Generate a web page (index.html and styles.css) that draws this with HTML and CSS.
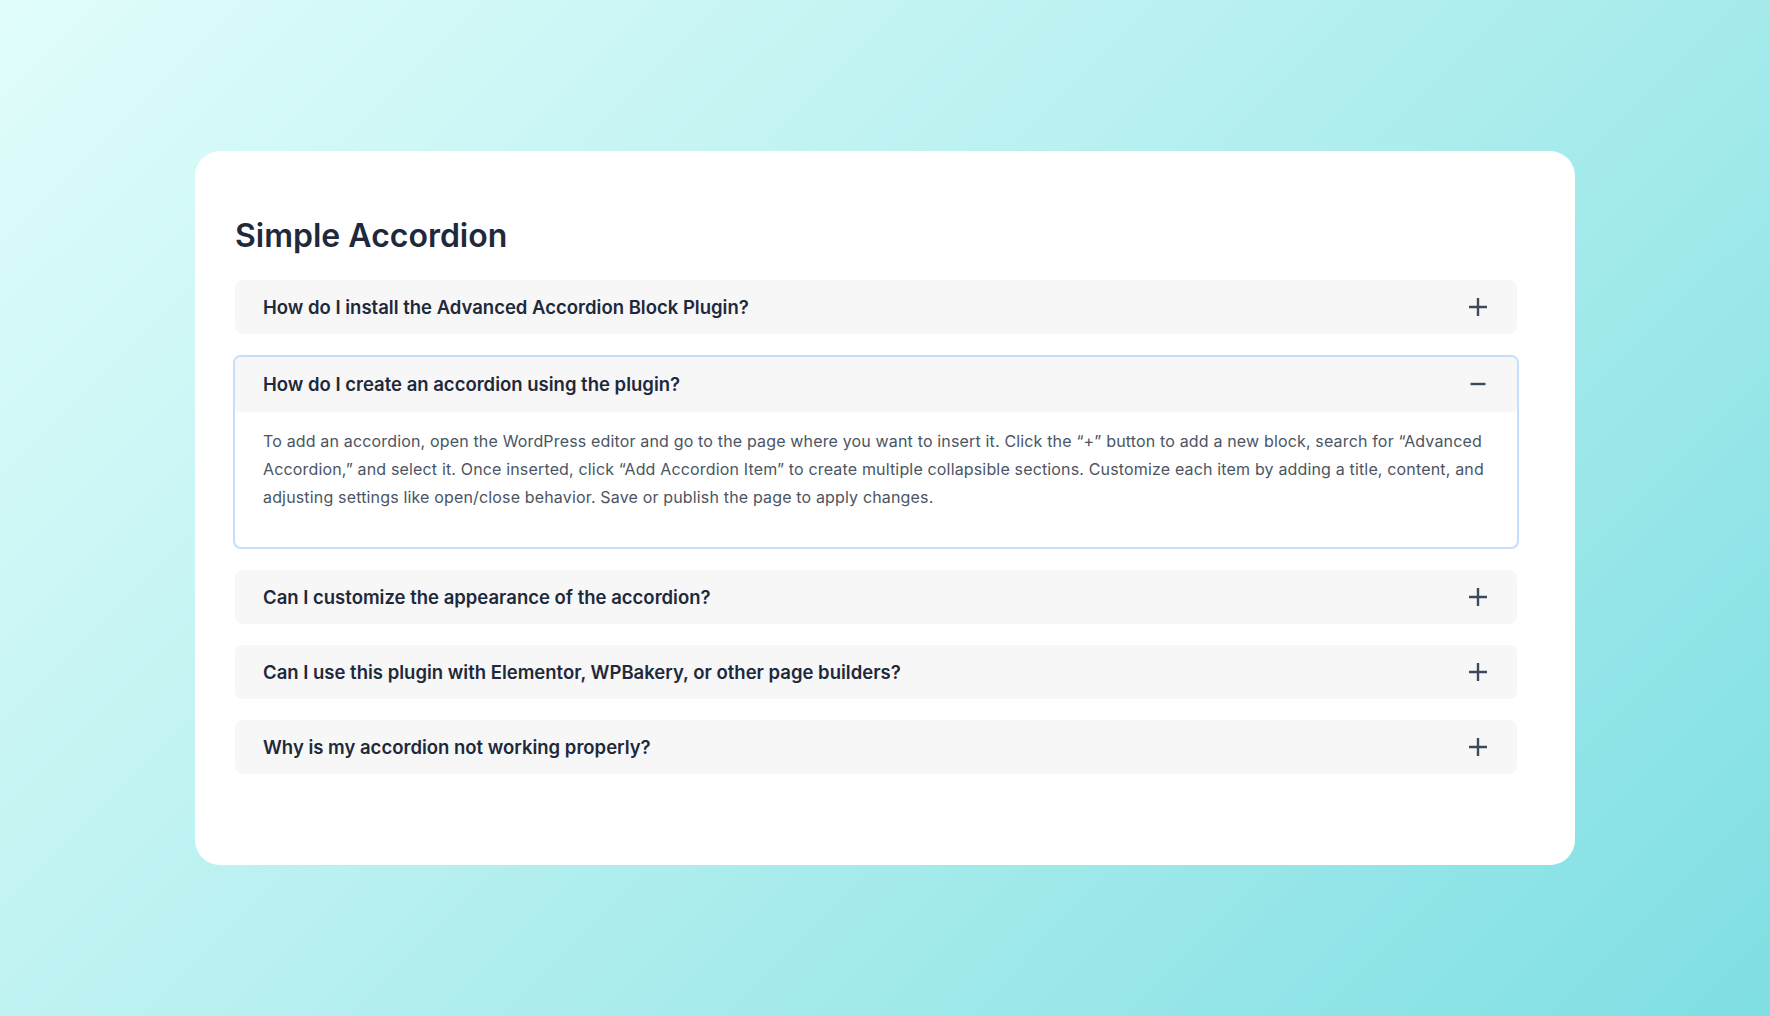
FILE: index.html
```html
<!DOCTYPE html>
<html>
  <head>
    <meta charset="utf-8">
    <title>Simple Accordion</title>
    <link rel="stylesheet" href="styles.css">
  </head>
  <body>
    <div class="card">
      <h1 class="title">Simple Accordion</h1>

      <div class="accordion">
        <div class="item">
          <div class="item_head">
            <span class="question">How do I install the Advanced Accordion Block Plugin?</span>
            <svg class="icon" width="20" height="20" viewBox="0 0 20 20"><path d="M1 10h18M10 1v18"/></svg>
          </div>
        </div>

        <div class="item open">
          <div class="item_head">
            <span class="question">How do I create an accordion using the plugin?</span>
            <svg class="icon" width="20" height="20" viewBox="0 0 20 20"><path d="M2.5 10h15"/></svg>
          </div>
          <div class="item_body">
            <p>To add an accordion, open the WordPress editor and go to the page where you want to insert it. Click the “+” button to add a new block, search for “Advanced Accordion,” and select it. Once inserted, click “Add Accordion Item” to create multiple collapsible sections. Customize each item by adding a title, content, and adjusting settings like open/close behavior. Save or publish the page to apply changes.</p>
          </div>
        </div>

        <div class="item">
          <div class="item_head">
            <span class="question">Can I customize the appearance of the accordion?</span>
            <svg class="icon" width="20" height="20" viewBox="0 0 20 20"><path d="M1 10h18M10 1v18"/></svg>
          </div>
        </div>

        <div class="item">
          <div class="item_head">
            <span class="question">Can I use this plugin with Elementor, WPBakery, or other page builders?</span>
            <svg class="icon" width="20" height="20" viewBox="0 0 20 20"><path d="M1 10h18M10 1v18"/></svg>
          </div>
        </div>

        <div class="item">
          <div class="item_head">
            <span class="question">Why is my accordion not working properly?</span>
            <svg class="icon" width="20" height="20" viewBox="0 0 20 20"><path d="M1 10h18M10 1v18"/></svg>
          </div>
        </div>
      </div>
    </div>
  </body>
</html>
```

FILE: styles.css
```css
html, body {
  height: 100%;
}
body {
  display: flex;
  align-items: center;
  justify-content: center;
  margin: 0;
  padding: 0;
  background: linear-gradient(135deg, #e0fdfb 0%, #b8f0f0 45%, #7fdfe3 100%);
  font-family: Inter, "Noto Sans", sans-serif;
  color: #1e293b;
}
.card {
  display: flex;
  flex-direction: column;
  box-sizing: border-box;
  width: 1380px;
  height: 714px;
  padding: 66px 58px 0 40px;
  border-radius: 25px;
  background-color: #ffffff;
}
.title {
  margin: 0 0 24px 0;
  font-size: 32px;
  font-weight: 600;
  line-height: 1.21;
  color: #1e293b;
}
.accordion {
  display: flex;
  flex-direction: column;
  gap: 21px;
}
.item {
  display: flex;
  flex-direction: column;
  border-radius: 8px;
  background-color: #f7f7f8;
}
.item.open {
  border: 2px solid #c6ddfc;
  background-color: #ffffff;
  margin: 0 -2px;
}
.item_head {
  display: flex;
  align-items: center;
  justify-content: space-between;
  height: 54px;
  padding: 0 29px 0 28px;
  background-color: #f7f7f8;
  border-radius: 8px;
}
.open .item_head {
  height: 55px;
  border-radius: 6px;
}
.question {
  font-size: 18.5px;
  font-weight: 600;
  color: #1e293b;
}
.icon {
  flex: 0 0 auto;
  fill: none;
  stroke: #3d4a5c;
  stroke-width: 2.4;
}
.item_body {
  padding: 15px 28px 36px 28px;
}
.item_body p {
  margin: 0;
  font-size: 16px;
  letter-spacing: 0.01em;
  line-height: 28px;
  color: #4b5563;
}
```
